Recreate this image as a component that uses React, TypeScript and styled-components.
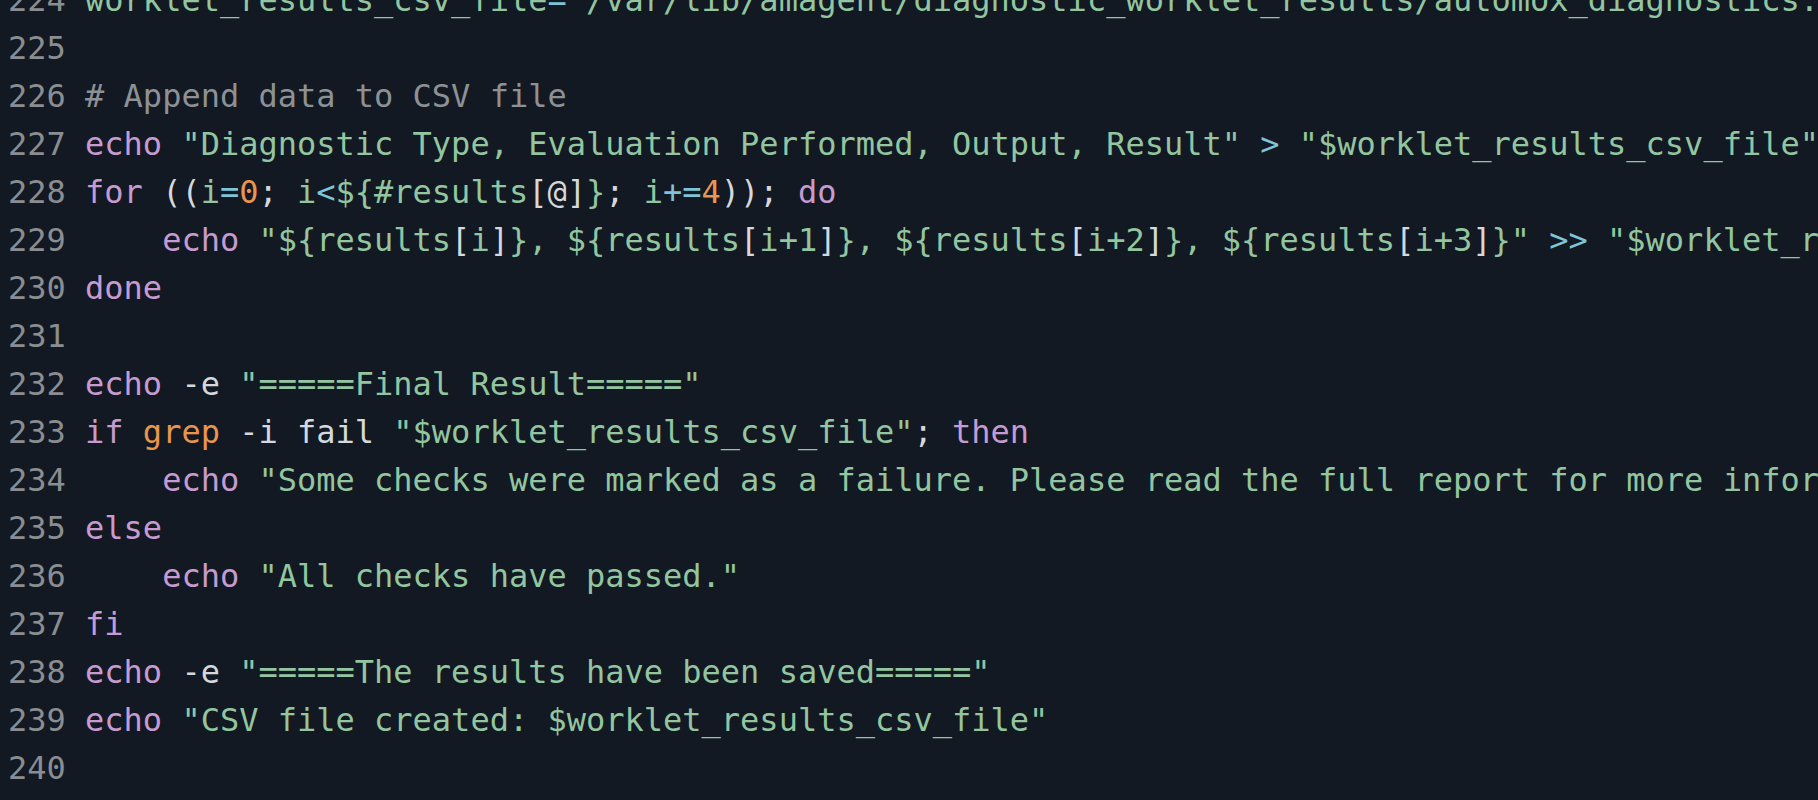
import React from "react";
import styled, { createGlobalStyle } from "styled-components";

type Tok = "str" | "kw" | "num" | "op" | "pl" | "cm" | "fn";

const colors: Record<Tok, string> = {
  str: "#92c5a0",
  kw: "#c69bd2",
  num: "#e8964f",
  op: "#7fc4d6",
  pl: "#d5d8dc",
  cm: "#8d9196",
  fn: "#e8964f",
};

const GlobalStyle = createGlobalStyle`
  html, body {
    margin: 0;
    padding: 0;
    background: #131922;
  }
`;

const Editor = styled.div`
  width: 1818px;
  height: 800px;
  overflow: hidden;
  background: #131922;
  font-family: "DejaVu Sans Mono", "Liberation Mono", monospace;
  font-size: 32px;
  line-height: 48px;
`;

const Lines = styled.div`
  display: flex;
  flex-direction: column;
  margin-top: -24px;
  padding-left: 8px;
`;

const Row = styled.div`
  display: flex;
  height: 48px;
  white-space: pre;
`;

const LineNo = styled.span`
  color: #8a8d91;
  width: 4ch;
  flex: none;
`;

const Code = styled.span`
  white-space: pre;
`;

const Token = styled.span<{ $t: Tok }>`
  color: ${(p) => colors[p.$t]};
`;

const L = (...parts: [Tok, string][]) => parts;

const lines: [Tok, string][][] = [
  L(["str", "worklet_results_csv_file"], ["op", "="], ["str", "\"/var/lib/amagent/diagnostic_worklet_results/automox_diagnostics.csv\""]),
  L(),
  L(["cm", "# Append data to CSV file"]),
  L(
    ["kw", "echo"],
    ["pl", " "],
    ["str", "\"Diagnostic Type, Evaluation Performed, Output, Result\""],
    ["pl", " "],
    ["op", ">"],
    ["pl", " "],
    ["str", "\"$worklet_results_csv_file\""]
  ),
  L(
    ["kw", "for"],
    ["pl", " (("],
    ["str", "i"],
    ["op", "="],
    ["num", "0"],
    ["pl", "; "],
    ["str", "i"],
    ["op", "<"],
    ["str", "${#results"],
    ["pl", "[@]"],
    ["str", "}"],
    ["pl", "; "],
    ["str", "i"],
    ["op", "+="],
    ["num", "4"],
    ["pl", ")); "],
    ["kw", "do"]
  ),
  L(
    ["pl", "    "],
    ["kw", "echo"],
    ["pl", " "],
    ["str", "\"${results"],
    ["pl", "["],
    ["str", "i"],
    ["pl", "]"],
    ["str", "}, ${results"],
    ["pl", "["],
    ["str", "i+1"],
    ["pl", "]"],
    ["str", "}, ${results"],
    ["pl", "["],
    ["str", "i+2"],
    ["pl", "]"],
    ["str", "}, ${results"],
    ["pl", "["],
    ["str", "i+3"],
    ["pl", "]"],
    ["str", "}\""],
    ["pl", " "],
    ["op", ">>"],
    ["pl", " "],
    ["str", "\"$worklet_results_csv_file\""]
  ),
  L(["kw", "done"]),
  L(),
  L(["kw", "echo"], ["pl", " -e "], ["str", "\"=====Final Result=====\""]),
  L(
    ["kw", "if"],
    ["pl", " "],
    ["fn", "grep"],
    ["pl", " -i fail "],
    ["str", "\"$worklet_results_csv_file\""],
    ["pl", "; "],
    ["kw", "then"]
  ),
  L(
    ["pl", "    "],
    ["kw", "echo"],
    ["pl", " "],
    ["str", "\"Some checks were marked as a failure. Please read the full report for more information.\""]
  ),
  L(["kw", "else"]),
  L(["pl", "    "], ["kw", "echo"], ["pl", " "], ["str", "\"All checks have passed.\""]),
  L(["kw", "fi"]),
  L(["kw", "echo"], ["pl", " -e "], ["str", "\"=====The results have been saved=====\""]),
  L(["kw", "echo"], ["pl", " "], ["str", "\"CSV file created: $worklet_results_csv_file\""]),
  L(),
];

export default function App() {
  return (
    <>
      <GlobalStyle />
      <Editor>
        <Lines>
          {lines.map((toks, i) => (
            <Row key={i}>
              <LineNo>{224 + i}</LineNo>
              <Code>
                {toks.map(([t, s], j) => (
                  <Token key={j} $t={t}>
                    {s}
                  </Token>
                ))}
              </Code>
            </Row>
          ))}
        </Lines>
      </Editor>
    </>
  );
}
